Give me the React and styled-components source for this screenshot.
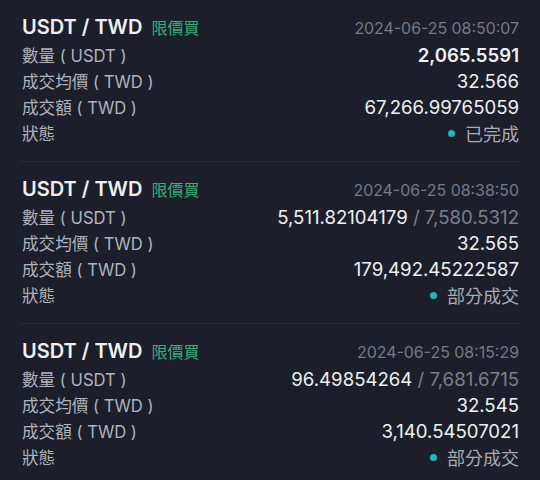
import React from 'react';
import styled, { createGlobalStyle } from 'styled-components';

const GlobalStyle = createGlobalStyle`
  html, body {
    margin: 0;
    padding: 0;
    background: #1c1f29;
  }
  body {
    font-family: Inter, "Noto Sans", "Noto Sans CJK TC", sans-serif;
    -webkit-font-smoothing: antialiased;
  }
`;

const Page = styled.div`
  width: 540px;
  height: 480px;
  overflow: hidden;
  padding: 0 21px 0 20px;
  box-sizing: border-box;
  background: #1c1f29;
`;

const Order = styled.div`
  padding: 12px 0 15px 2px;
  border-bottom: 1px solid #282c37;
`;

const TitleRow = styled.div`
  display: flex;
  align-items: baseline;
  height: 30px;
  line-height: 30px;
`;

const Pair = styled.span`
  font-family: Inter, "Noto Sans", sans-serif;
  font-size: 20px;
  font-weight: 600;
  color: #eef0f3;
`;

const Side = styled.span`
  margin-left: 9px;
  font-family: "Noto Sans CJK TC", sans-serif;
  font-size: 16px;
  color: #2db47f;
`;

const Time = styled.span`
  margin-left: auto;
  font-family: Inter, "Noto Sans", sans-serif;
  font-size: 15.9px;
  color: #767a84;
`;

const Row = styled.div`
  display: flex;
  align-items: center;
  justify-content: space-between;
  height: 26px;
`;

const Label = styled.span`
  font-family: Inter, "Noto Sans CJK TC", sans-serif;
  font-size: 16.6px;
  color: #b1b4bc;
`;

const Value = styled.span`
  font-family: Inter, "Noto Sans", sans-serif;
  font-size: 18.6px;
  font-weight: ${(p) => (p.$bold ? 600 : 400)};
  color: #eef0f3;
`;

const Total = styled.span`
  color: #7b7f89;
`;

const Status = styled.span`
  display: flex;
  align-items: center;
  font-family: "Noto Sans CJK TC", sans-serif;
  font-size: 18px;
  color: #a9acb4;
`;

const Dot = styled.span`
  width: 7px;
  height: 7px;
  border-radius: 50%;
  background: #1fb6bf;
  margin-right: 10px;
`;

const orders = [
  {
    time: '2024-06-25 08:50:07',
    filled: '2,065.5591',
    total: null,
    avg: '32.566',
    amount: '67,266.99765059',
    status: '已完成',
  },
  {
    time: '2024-06-25 08:38:50',
    filled: '5,511.82104179',
    total: '7,580.5312',
    avg: '32.565',
    amount: '179,492.45222587',
    status: '部分成交',
  },
  {
    time: '2024-06-25 08:15:29',
    filled: '96.49854264',
    total: '7,681.6715',
    avg: '32.545',
    amount: '3,140.54507021',
    status: '部分成交',
  },
];

export default function App() {
  return (
    <>
      <GlobalStyle />
      <Page>
        {orders.map((o) => (
          <Order key={o.time}>
            <TitleRow>
              <Pair>USDT / TWD</Pair>
              <Side>限價買</Side>
              <Time>{o.time}</Time>
            </TitleRow>
            <Row>
              <Label>數量 ( USDT )</Label>
              <Value $bold={!o.total}>
                {o.filled}
                {o.total && <Total> / {o.total}</Total>}
              </Value>
            </Row>
            <Row>
              <Label>成交均價 ( TWD )</Label>
              <Value>{o.avg}</Value>
            </Row>
            <Row>
              <Label>成交額 ( TWD )</Label>
              <Value>{o.amount}</Value>
            </Row>
            <Row>
              <Label>狀態</Label>
              <Status>
                <Dot />
                {o.status}
              </Status>
            </Row>
          </Order>
        ))}
      </Page>
    </>
  );
}
